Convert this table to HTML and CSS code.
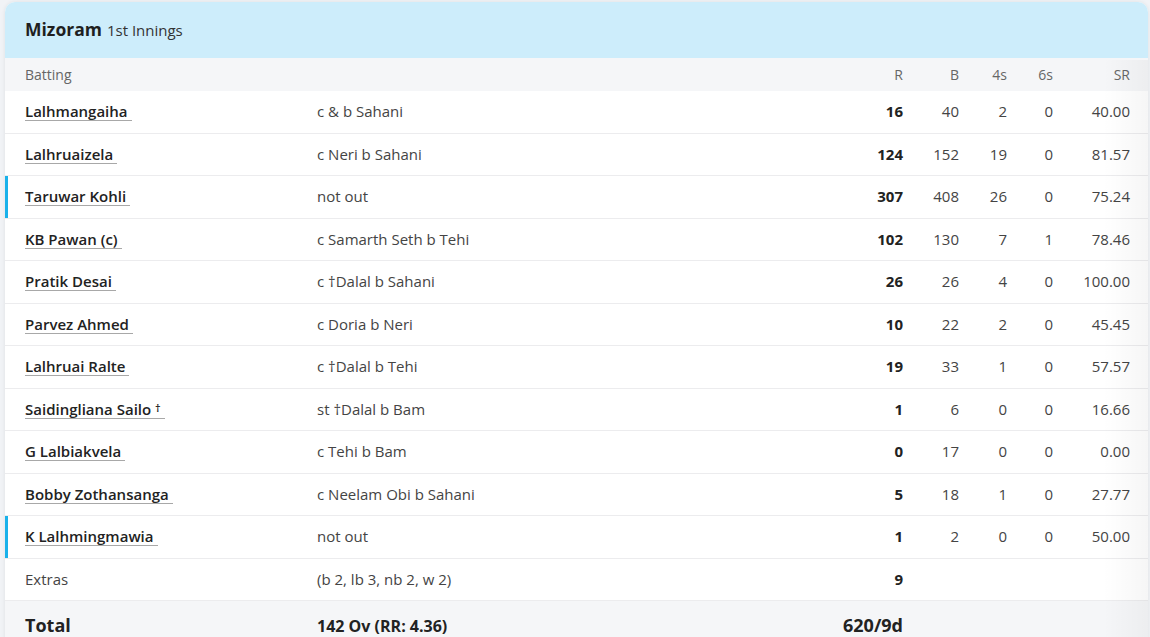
FILE: index.html
```html
<!DOCTYPE html>
<html>
	<head>
		<meta charset="UTF-8">
		<title>Mizoram 1st Innings</title>
		<link rel="stylesheet" href="styles.css">
	</head>
	<body>
		<div class="card">
			<div class="card-head">
				<span class="team">Mizoram</span> <span class="innings">1st Innings</span>
			</div>
			<div class="row head-row">
				<div>Batting</div>
				<div></div>
				<div class="num">R</div>
				<div class="num">B</div>
				<div class="num">4s</div>
				<div class="num">6s</div>
				<div class="num">SR</div>
			</div>
			<div id="batters"></div>
			<div class="row extras-row">
				<div>Extras</div>
				<div>(b 2, lb 3, nb 2, w 2)</div>
				<div class="num runs">9</div>
				<div></div><div></div><div></div><div></div>
			</div>
			<div class="row total-row">
				<div class="total-label">Total</div>
				<div class="total-overs">142 Ov (RR: 4.36)</div>
				<div class="num total-score">620/9d</div>
				<div></div><div></div><div></div><div></div>
			</div>
			<div class="fade"></div>
		</div>
		<script>
			var batters = [
				["Lalhmangaiha", "c &amp; b Sahani", 16, 40, 2, 0, "40.00", false],
				["Lalhruaizela", "c Neri b Sahani", 124, 152, 19, 0, "81.57", false],
				["Taruwar Kohli", "not out", 307, 408, 26, 0, "75.24", true],
				["KB Pawan (c)", "c Samarth Seth b Tehi", 102, 130, 7, 1, "78.46", false],
				["Pratik Desai", "c †Dalal b Sahani", 26, 26, 4, 0, "100.00", false],
				["Parvez Ahmed", "c Doria b Neri", 10, 22, 2, 0, "45.45", false],
				["Lalhruai Ralte", "c †Dalal b Tehi", 19, 33, 1, 0, "57.57", false],
				["Saidingliana Sailo <span class='dagger'>†</span>", "st †Dalal b Bam", 1, 6, 0, 0, "16.66", false],
				["G Lalbiakvela", "c Tehi b Bam", 0, 17, 0, 0, "0.00", false],
				["Bobby Zothansanga", "c Neelam Obi b Sahani", 5, 18, 1, 0, "27.77", false],
				["K Lalhmingmawia", "not out", 1, 2, 0, 0, "50.00", true]
			];
			var out = "";
			for (var i = 0; i < batters.length; i++) {
				var b = batters[i];
				out += "<div class='row" + (b[7] ? " not-out" : "") + "'>";
				out += "<div><a class='name'>" + b[0] + "</a></div>";
				out += "<div class='how'>" + b[1] + "</div>";
				out += "<div class='num runs'>" + b[2] + "</div>";
				out += "<div class='num'>" + b[3] + "</div>";
				out += "<div class='num'>" + b[4] + "</div>";
				out += "<div class='num'>" + b[5] + "</div>";
				out += "<div class='num'>" + b[6] + "</div>";
				out += "</div>";
			}
			document.getElementById("batters").innerHTML = out;
		</script>
	</body>
</html>
```

FILE: styles.css
```css
html, body {
	margin: 0;
	height: 100%;
	overflow: hidden;
}
body {
	padding: 2px 0 0 5px;
	background-color: #f1f3f6;
	font-family: "Open Sans", "Noto Sans", sans-serif;
	color: #333;
}
.card {
	position: relative;
	width: 1143px;
	background-color: #fff;
	border-radius: 10px 10px 0 0;
	box-shadow: 0 0 4px rgba(0, 0, 0, 0.08);
	overflow: hidden;
}
.card-head {
	height: 56px;
	padding: 0 20px 2px;
	box-sizing: border-box;
	display: flex;
	align-items: center;
	gap: 5px;
	background-color: #cdedfb;
}
.team {
	font-size: 17.5px;
	font-weight: 700;
	color: #1f1f1f;
}
.innings {
	font-size: 15px;
	color: #333;
	padding-top: 2px;
}
.row {
	display: grid;
	grid-template-columns: 292px 506px 80px 56px 48px 46px 1fr;
	align-items: center;
	height: 42.5px;
	box-sizing: border-box;
	padding: 0 18px 1px 20px;
	border-bottom: 1px solid #ececee;
	font-size: 15px;
	color: #444;
}
.row.head-row {
	height: 33px;
	padding-bottom: 0;
	border-bottom: 0;
	background-color: #f5f6f8;
	font-size: 14px;
	color: #666;
}
.row.not-out {
	box-shadow: inset 3px 0 0 #19b1ea;
}
.num {
	text-align: right;
}
.runs {
	font-weight: 700;
	color: #222;
}
.name {
	display: inline-block;
	line-height: 17px;
	padding-right: 4px;
	border-bottom: 1px solid #a8a8a8;
	font-weight: 600;
	color: #222;
}
.dagger {
	font-size: 11px;
	vertical-align: 3px;
}
.total-row {
	height: 60px;
	align-items: start;
	padding-top: 11px;
	border-bottom: 0;
	background-color: #f5f6f8;
	color: #222;
}
.total-label {
	font-size: 18px;
	font-weight: 700;
	line-height: 26px;
}
.total-overs {
	font-size: 16px;
	font-weight: 700;
	line-height: 28px;
}
.total-score {
	font-size: 18px;
	font-weight: 700;
	line-height: 26px;
}
.fade {
	position: absolute;
	top: 58px;
	right: 0;
	bottom: 0;
	width: 45px;
	background: linear-gradient(to right, rgba(0, 0, 0, 0), rgba(0, 0, 0, 0.035));
	pointer-events: none;
}
```
